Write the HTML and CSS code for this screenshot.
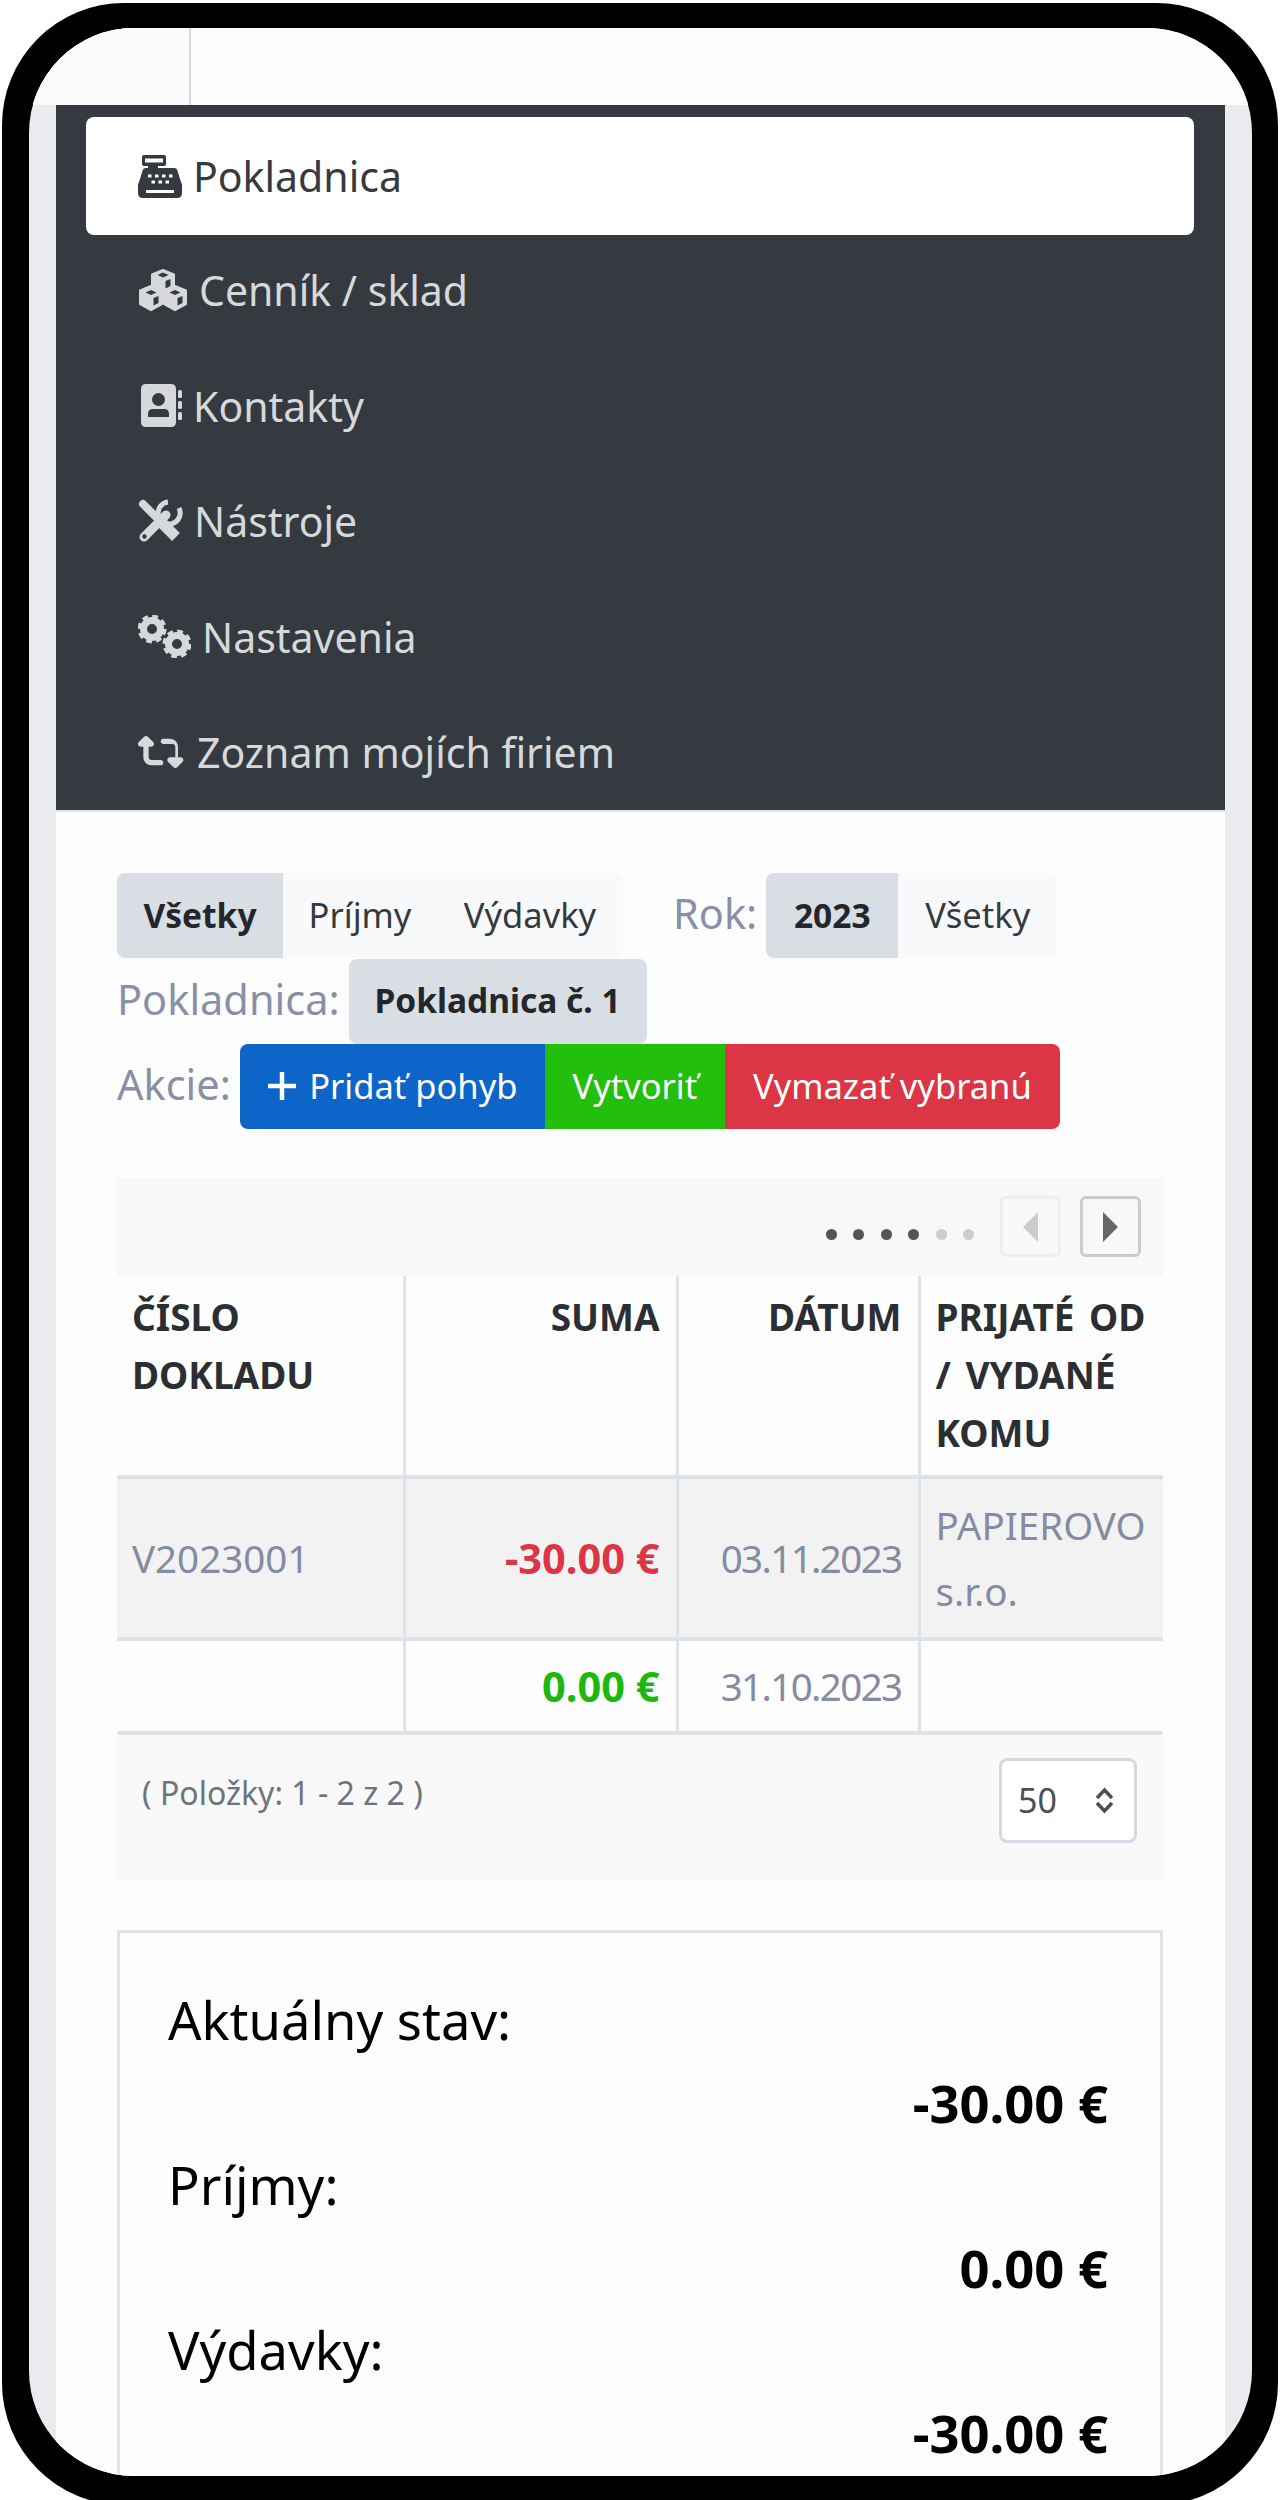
FILE: index.html
```html
<!DOCTYPE html>
<html lang="sk">
<head>
    <meta charset="UTF-8">
    <title>Pokladnica</title>
    <link rel="stylesheet" href="styles.css">
</head>
<body>
    <div class="phone">
        <div class="screen">
            <div class="topbar"><div class="brand"></div></div>
            <div class="main">
                <nav class="nav">
                    <a class="nav-item active" href="#">
                        <svg class="icon icon-register" viewBox="0 0 44 43"><path fill="currentColor" fill-rule="evenodd" d="M6 0H26Q28 0 28 2V9Q28 11 26 11H20V13H36Q39 13 39.5 16L44 30V38Q44 43 39 43H5Q0 43 0 38V30L4.5 16Q5 13 8 13H10V11H6Q4 11 4 9V2Q4 0 6 0ZM7 3.5V7.5H25V3.5ZM10 19.5V22.5H13.5V19.5ZM17 19.5V22.5H20.5V19.5ZM24 19.5V22.5H27.5V19.5ZM31 19.5V22.5H34.5V19.5ZM13.5 25.5V28.5H17V25.5ZM20.5 25.5V28.5H24V25.5ZM27.5 25.5V28.5H31V25.5ZM8 35V38H36V35Z"/></svg>
                        <span>Pokladnica</span>
                    </a>
                    <a class="nav-item" href="#">
                        <svg class="icon icon-cubes" viewBox="0 0 50 42">
                            <g fill="currentColor" stroke="currentColor" stroke-width="2" stroke-linejoin="round">
                                <polygon points="13,17 24,21.5 24,35 13,41 2,35 2,21.5"/>
                                <polygon points="37,17 48,21.5 48,35 37,41 26,35 26,21.5"/>
                                <polygon points="25,1 36,5.5 36,19 25,25 14,19 14,5.5"/>
                            </g>
                            <g fill="#343a40">
                                <polygon points="25,3.5 30.5,6 25,8.5 19.5,6"/>
                                <polygon points="27.5,12 32.5,10 32.5,17 27.5,19.5"/>
                                <polygon points="13,21 18.5,23.5 13,26 7.5,23.5"/>
                                <polygon points="15.5,29 20.5,27 20.5,34 15.5,36.5"/>
                                <polygon points="37,21 42.5,23.5 37,26 31.5,23.5"/>
                                <polygon points="39.5,29 44.5,27 44.5,34 39.5,36.5"/>
                            </g>
                        </svg>
                        <span>Cenník / sklad</span>
                    </a>
                    <a class="nav-item" href="#">
                        <svg class="icon icon-book" viewBox="0 0 41 43">
                            <path fill="currentColor" fill-rule="evenodd" d="M5 0H30Q35 0 35 5V38Q35 43 30 43H5Q0 43 0 38V5Q0 0 5 0ZM17.5 9A6.5 6.5 0 1 0 17.5 22A6.5 6.5 0 1 0 17.5 9ZM12 25Q7 25 7 30V33H28V30Q28 25 23 25Z"/>
                            <rect fill="currentColor" x="37" y="6" width="4" height="8" rx="1.5"/>
                            <rect fill="currentColor" x="37" y="17" width="4" height="8" rx="1.5"/>
                            <rect fill="currentColor" x="37" y="28" width="4" height="8" rx="1.5"/>
                        </svg>
                        <span>Kontakty</span>
                    </a>
                    <a class="nav-item" href="#">
                        <svg class="icon icon-tools" viewBox="0 0 45 44">
                            <g fill="none" stroke="currentColor" stroke-linecap="round">
                                <path stroke-width="8" d="M5 5L20 20"/>
                                <path stroke-width="11" stroke-linecap="butt" d="M24 24L38 38"/>
                                <path stroke-width="9" d="M6 38L28 16"/>
                                <path stroke-width="5" stroke-linecap="butt" d="M41 9A11 11 0 1 1 30 3"/>
                            </g>
                            <circle fill="#343a40" cx="6.5" cy="37.5" r="2.2"/>
                        </svg>
                        <span>Nástroje</span>
                    </a>
                    <a class="nav-item" href="#">
                        <svg class="icon icon-gears" viewBox="0 0 53 43">
                            <g fill="none" stroke="currentColor">
                                <circle cx="14" cy="14" r="8.5" stroke-width="7"/>
                                <circle cx="14" cy="14" r="12" stroke-width="5" stroke-dasharray="5.4 4"/>
                                <circle cx="39" cy="29" r="8.5" stroke-width="7"/>
                                <circle cx="39" cy="29" r="12" stroke-width="5" stroke-dasharray="5.4 4"/>
                            </g>
                        </svg>
                        <span>Nastavenia</span>
                    </a>
                    <a class="nav-item" href="#">
                        <svg class="icon icon-retweet" viewBox="0 64 576 384"><path fill="currentColor" d="M272 416c17.7 0 32-14.3 32-32s-14.3-32-32-32H160c-17.7 0-32-14.3-32-32V192h32c12.9 0 24.6-7.8 29.6-19.8s2.2-25.7-6.9-34.9l-64-64c-12.5-12.5-32.8-12.5-45.3 0l-64 64c-9.2 9.2-11.9 22.9-6.9 34.9s16.6 19.8 29.6 19.8l32 0 0 128c0 53 43 96 96 96H272zM304 96c-17.7 0-32 14.3-32 32s14.3 32 32 32l112 0c17.7 0 32 14.3 32 32l0 128H384c-12.9 0-24.6 7.8-29.6 19.8s-2.2 25.7 6.9 34.9l64 64c12.5 12.5 32.8 12.5 45.3 0l64-64c9.2-9.2 11.9-22.9 6.9-34.9s-16.6-19.8-29.6-19.8l-32 0 0-128c0-53-43-96-96-96L304 96z"/></svg>
                        <span>Zoznam mojích firiem</span>
                    </a>
                </nav>

                <div class="content">
                    <div class="filter-row">
                        <div class="btn-group">
                            <a class="btn selected btn-all" href="#">Všetky</a>
                            <a class="btn btn-in" href="#">Príjmy</a>
                            <a class="btn btn-out" href="#">Výdavky</a>
                        </div>
                        <span class="label label-year">Rok:</span>
                        <div class="btn-group">
                            <a class="btn selected btn-year" href="#">2023</a>
                            <a class="btn btn-allyears" href="#">Všetky</a>
                        </div>
                    </div>
                    <div class="filter-row">
                        <span class="label label-register">Pokladnica:</span>
                        <div class="btn-group">
                            <a class="btn selected btn-register" href="#">Pokladnica č. 1</a>
                        </div>
                    </div>
                    <div class="filter-row">
                        <span class="label label-action">Akcie:</span>
                        <div class="btn-group actions">
                            <a class="btn btn-blue" href="#">
                                <svg class="plus" viewBox="0 0 30 30"><path d="M15 1V29M1 15H29"/></svg>
                                <span>Pridať pohyb</span>
                            </a>
                            <a class="btn btn-green" href="#">Vytvoriť</a>
                            <a class="btn btn-red" href="#">Vymazať vybranú</a>
                        </div>
                    </div>

                    <div class="table-top">
                        <div class="dots">
                            <i></i><i></i><i></i><i></i><i class="off"></i><i class="off"></i>
                        </div>
                        <a class="pager disabled" href="#"><span class="arrow-left"></span></a>
                        <a class="pager" href="#"><span class="arrow-right"></span></a>
                    </div>

                    <table class="moves">
                        <colgroup>
                            <col class="col-doc"><col class="col-sum"><col class="col-date"><col class="col-who">
                        </colgroup>
                        <thead>
                            <tr>
                                <th>ČÍSLO DOKLADU</th>
                                <th class="right">SUMA</th>
                                <th class="right">DÁTUM</th>
                                <th class="who">PRIJATÉ OD / VYDANÉ KOMU</th>
                            </tr>
                        </thead>
                        <tbody>
                            <tr class="row-a">
                                <td>V2023001</td>
                                <td class="right minus">-30.00 €</td>
                                <td class="right date">03.11.2023</td>
                                <td>PAPIEROVO s.r.o.</td>
                            </tr>
                            <tr class="row-b">
                                <td></td>
                                <td class="right plus-sum">0.00 €</td>
                                <td class="right date">31.10.2023</td>
                                <td></td>
                            </tr>
                        </tbody>
                    </table>

                    <div class="table-foot">
                        <span class="count">( Položky: 1 - 2 z 2 )</span>
                        <div class="page-size">
                            <span>50</span>
                            <svg viewBox="0 0 25 27"><path d="M5 11L12.5 3L20 11M5 16L12.5 24L20 16"/></svg>
                        </div>
                    </div>

                    <div class="summary">
                        <div class="sum-label">Aktuálny stav:</div>
                        <div class="sum-value">-30.00 €</div>
                        <div class="sum-label">Príjmy:</div>
                        <div class="sum-value">0.00 €</div>
                        <div class="sum-label">Výdavky:</div>
                        <div class="sum-value">-30.00 €</div>
                    </div>
                </div>
            </div>
        </div>
    </div>
</body>
</html>
```

FILE: styles.css
```css
* {
    margin: 0;
    padding: 0;
    box-sizing: border-box;
}

html, body {
    height: 2500px;
    overflow: hidden;
    background: #fff;
}

body {
    font-family: "Noto Sans", "Open Sans", sans-serif;
    padding: 3px 2px 0;
}

a {
    text-decoration: none;
    color: inherit;
}

/* device frame */
.phone {
    width: 1276px;
    height: 2502px;
    background: #000;
    border-radius: 122px;
    padding: 25px 26px 0 27px;
}

.screen {
    height: 2448px;
    border-radius: 105px;
    overflow: hidden;
    background: #e9ebef;
}

.topbar {
    height: 77px;
    background: #fdfdfd;
}

.brand {
    width: 162px;
    height: 77px;
    background: #fbfbfb;
    border-right: 2px solid #d5d8e4;
}

.main {
    margin: 0 27px;
    background: #fdfdfd;
    height: 2371px;
}

/* side menu */
.nav {
    background: #343a40;
    padding-top: 12px;
    height: 705px;
}

.nav-item {
    display: flex;
    align-items: center;
    height: 115.5px;
    margin-left: 30px;
    width: 1108px;
    padding-left: 52px;
    color: #d6d8db;
    font-size: 41px;
    line-height: 56px;
}

.nav-item.active {
    height: 118px;
    margin-bottom: -2.5px;
    background: #fff;
    border-radius: 8px;
    color: #343a40;
}

.icon {
    flex: none;
    margin-right: 11px;
}

.icon-register { width: 44px; height: 43px; }
.icon-cubes { width: 50px; height: 42px; }
.icon-book { width: 41px; height: 43px; margin-left: 3px; }
.icon-tools { width: 45px; height: 44px; }
.icon-gears { width: 53px; height: 43px; }
.icon-retweet { width: 48px; height: 32px; }

/* filters */
.content {
    border-top: 2px solid #dfe3e8;
    padding: 61px 62px 0 61px;
}

.filter-row {
    display: flex;
    align-items: center;
    height: 85.5px;
}

.label {
    padding-bottom: 5px;
    color: #8a8fa8;
    font-size: 41.5px;
}

.label-year { margin: 0 9px 0 50px; }
.label-register { margin-right: 9px; }
.label-action { margin-right: 9px; }

.btn-group {
    display: flex;
    height: 85px;
    border-radius: 8px;
    overflow: hidden;
    background: #f8f9fa;
}

.btn {
    display: flex;
    align-items: center;
    justify-content: center;
    padding-bottom: 2px;
    color: #343a40;
    font-size: 34.5px;
}

.btn.selected {
    background: #d9dde4;
    color: #23272b;
    font-size: 33.5px;
    font-weight: 700;
}

.btn-all { width: 166px; }
.btn-in { width: 154px; }
.btn-out { width: 186px; }
.btn-year { width: 132px; }
.btn-allyears { width: 159px; }
.btn-register { width: 298px; }

.actions .btn {
    color: #fff;
}

.btn-blue { width: 305px; background: #0d65c9; }
.btn-green { width: 180px; background: #22c00d; }
.btn-red { width: 335px; background: #dc3545; }

.plus {
    width: 30px;
    height: 30px;
    margin-right: 12px;
    fill: none;
    stroke: #fff;
    stroke-width: 4.5;
}

/* table */
.table-top {
    display: flex;
    align-items: center;
    justify-content: flex-end;
    height: 98px;
    margin-top: 48px;
    padding-right: 22px;
    background: #f9f8f8;
}

.dots {
    display: flex;
    gap: 16.5px;
    margin-top: 16px;
    margin-right: 7px;
}

.dots i {
    width: 11px;
    height: 11px;
    border-radius: 50%;
    background: #555;
}

.dots i.off {
    background: #ccc;
}

.pager {
    display: flex;
    align-items: center;
    justify-content: center;
    width: 61px;
    height: 61px;
    margin-left: 19px;
    border: 3px solid #ccc;
    border-radius: 6px;
}

.pager.disabled {
    border-color: #eeeeee;
}

.arrow-left {
    border-style: solid;
    border-width: 15px 15px 15px 0;
    border-color: transparent #ccc transparent transparent;
}

.arrow-right {
    border-style: solid;
    border-width: 15px 0 15px 15px;
    border-color: transparent transparent transparent #666;
}

.moves {
    width: 1046px;
    table-layout: fixed;
    border-collapse: collapse;
    font-size: 38.5px;
}

.col-doc { width: 287.5px; }
.col-sum { width: 272.5px; }
.col-date { width: 242px; }
.col-who { width: 244px; }

.moves th,
.moves td {
    padding: 0 16px 0 15px;
    text-align: left;
    vertical-align: middle;
    border-left: 3px solid #dee2e9;
}

.moves th:first-child,
.moves td:first-child {
    border-left: 0;
}

.moves th {
    height: 201.5px;
    padding-top: 12px;
    padding-bottom: 12px;
    vertical-align: top;
    color: #2b2f33;
    font-size: 37px;
    font-weight: 700;
    line-height: 58px;
    border-bottom: 4px solid #dee2e9;
}

.moves th.who {
    padding-right: 6px;
    word-spacing: 5px;
}

.moves td {
    color: #858ba3;
    line-height: 66px;
    border-bottom: 4px solid #dee2e9;
}

.moves .right {
    text-align: right;
}

.moves td.date {
    letter-spacing: -1.6px;
}

.row-a td {
    height: 161.5px;
    background: #f2f2f2;
}

.row-b td {
    height: 94px;
}

.moves td.minus {
    color: #dc3545;
    font-size: 41.5px;
    font-weight: 700;
}

.moves td.plus-sum {
    color: #1db80e;
    font-size: 41.5px;
    font-weight: 700;
}

.table-foot {
    display: flex;
    justify-content: space-between;
    align-items: flex-start;
    height: 146.5px;
    padding: 23px 26px 0 25px;
    background: #f9f9f9;
}

.count {
    margin-top: 13px;
    color: #6c757d;
    font-size: 32px;
}

.page-size {
    display: flex;
    align-items: center;
    justify-content: space-between;
    width: 138px;
    height: 85px;
    padding: 0 17px 0 16px;
    background: #fff;
    border: 3px solid #d3d8e4;
    border-radius: 8px;
    color: #495057;
    font-size: 34px;
}

.page-size svg {
    width: 25px;
    height: 27px;
    fill: none;
    stroke: #495057;
    stroke-width: 3.5;
}

/* totals */
.summary {
    margin-top: 49px;
    padding: 46px 52px 0 48px;
    border: 3px solid #dfe3e8;
    height: 600px;
    color: #000;
    font-size: 52.5px;
    line-height: 82.5px;
}

.sum-value {
    text-align: right;
    font-weight: 700;
}
```
